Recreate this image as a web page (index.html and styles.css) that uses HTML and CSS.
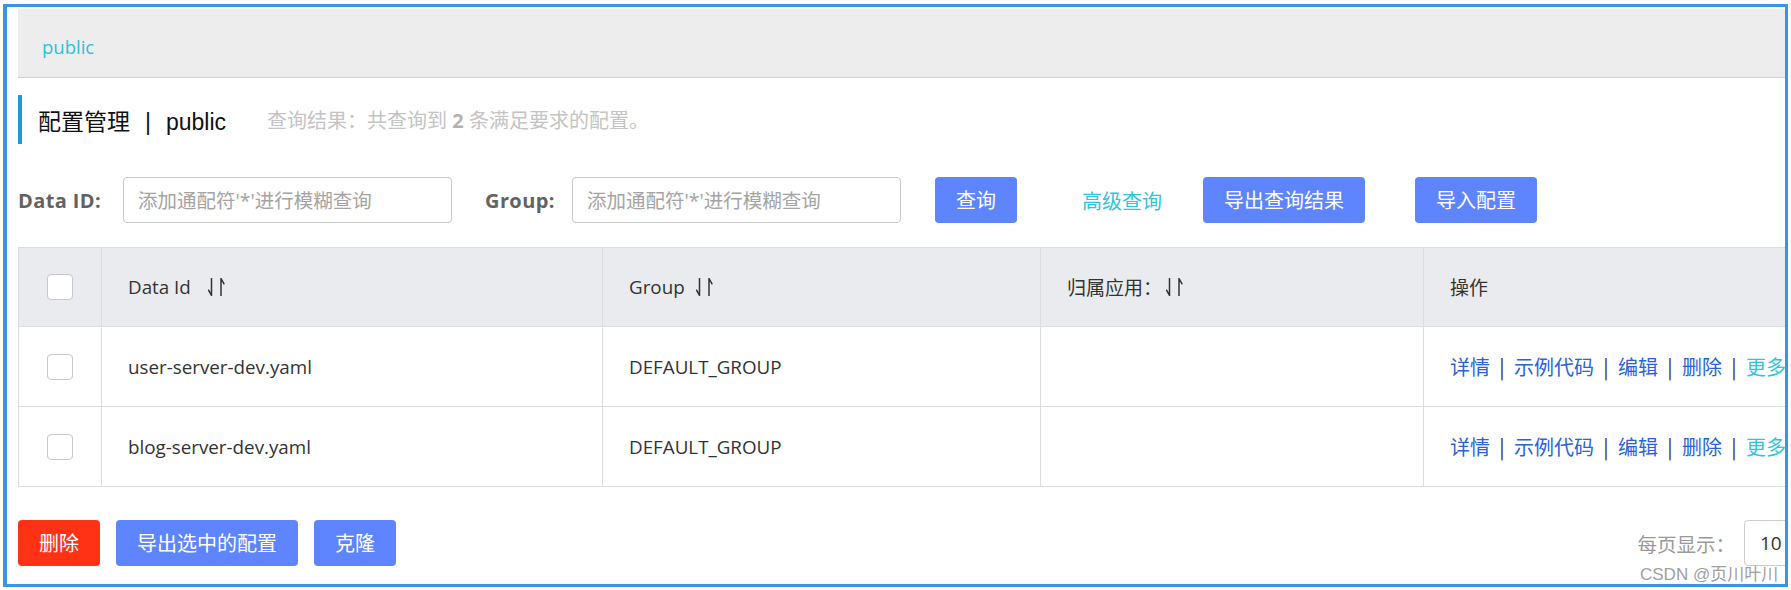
FILE: index.html
```html
<!DOCTYPE html>
<html lang="zh-CN">
<head>
<meta charset="utf-8">
<title>配置管理</title>
<link rel="stylesheet" href="styles.css">
</head>
<body>
<div class="shot">
  <div class="page">
    <div class="topbar"><span class="ns">public</span></div>

    <div class="title">
      <span class="title-main">配置管理<span class="title-sep">|</span>public</span>
      <span class="result">查询结果：共查询到 <b>2</b> 条满足要求的配置。</span>
    </div>

    <div class="search">
      <span class="lbl lbl-id">Data ID:</span>
      <input class="inp" type="text" placeholder="添加通配符'*'进行模糊查询">
      <span class="lbl lbl-group">Group:</span>
      <input class="inp" type="text" placeholder="添加通配符'*'进行模糊查询">
      <button class="btn btn-query">查询</button>
      <a class="adv">高级查询</a>
      <button class="btn btn-export">导出查询结果</button>
      <button class="btn btn-import">导入配置</button>
    </div>

    <div class="grid">
      <div class="row head">
        <div class="cell c-check"><span class="cb"></span></div>
        <div class="cell">Data Id<svg class="sort sort-id" viewBox="0 0 17 18" width="17" height="18"><path d="M3.5 0.5V17.5L0.6 12.2M13 17.5V0.5L16 5.8"/></svg></div>
        <div class="cell">Group<svg class="sort sort-group" viewBox="0 0 17 18" width="17" height="18"><path d="M3.5 0.5V17.5L0.6 12.2M13 17.5V0.5L16 5.8"/></svg></div>
        <div class="cell cjk">归属应用：<svg class="sort sort-app" viewBox="0 0 17 18" width="17" height="18"><path d="M3.5 0.5V17.5L0.6 12.2M13 17.5V0.5L16 5.8"/></svg></div>
        <div class="cell cjk">操作</div>
      </div>
      <div class="row">
        <div class="cell c-check"><span class="cb"></span></div>
        <div class="cell">user-server-dev.yaml</div>
        <div class="cell">DEFAULT_GROUP</div>
        <div class="cell"></div>
        <div class="cell actions"><a>详情</a><span class="sep">|</span><a>示例代码</a><span class="sep">|</span><a>编辑</a><span class="sep">|</span><a>删除</a><span class="sep">|</span><a class="more">更多</a></div>
      </div>
      <div class="row">
        <div class="cell c-check"><span class="cb"></span></div>
        <div class="cell">blog-server-dev.yaml</div>
        <div class="cell">DEFAULT_GROUP</div>
        <div class="cell"></div>
        <div class="cell actions"><a>详情</a><span class="sep">|</span><a>示例代码</a><span class="sep">|</span><a>编辑</a><span class="sep">|</span><a>删除</a><span class="sep">|</span><a class="more">更多</a></div>
      </div>
    </div>

    <div class="footer">
      <button class="btn btn-danger">删除</button>
      <button class="btn btn-gap">导出选中的配置</button>
      <button class="btn btn-gap">克隆</button>
      <div class="pager">
        <span class="pager-lbl">每页显示：</span>
        <span class="select">10</span>
      </div>
    </div>
  </div>
  <div class="watermark">CSDN @页川叶川</div>
</div>
</body>
</html>
```

FILE: styles.css
```css
html, body {
  margin: 0;
  padding: 0;
  background: #ffffff;
}

body {
  font-family: "Open Sans", "Noto Sans CJK SC", sans-serif;
  color: #333333;
}

.shot {
  position: relative;
  box-sizing: border-box;
  margin: 4px 0 0 3px;
  width: 1785px;
  height: 583px;
  border: 3px solid #3a95e3;
  border-left-width: 4px;
  overflow: hidden;
  background: #ffffff;
}

.page {
  width: 1800px;
  margin-left: 11px;
  padding-top: 2px;
}

/* namespace bar */
.topbar {
  box-sizing: border-box;
  height: 69px;
  padding: 7px 0 0 24px;
  display: flex;
  align-items: center;
  background: #ededed;
  border-bottom: 1px solid #cfcfcf;
}

.ns {
  font-size: 18.5px;
  color: #2fc0dd;
}

/* title */
.title {
  margin-top: 17px;
  height: 49px;
  box-sizing: border-box;
  border-left: 4px solid #1b9ad6;
  padding-left: 16px;
  display: flex;
  align-items: center;
}

.title-main {
  font-family: "Liberation Sans", "Noto Sans CJK SC", sans-serif;
  font-size: 23px;
  color: #111111;
}

.title-sep {
  display: inline-block;
  width: 36px;
  text-align: center;
}

.result {
  margin-left: 41px;
  font-size: 20px;
  color: #c4c4c4;
}

.result b {
  color: #b3b3b3;
}

/* search */
.search {
  margin-top: 33px;
  height: 46px;
  display: flex;
  align-items: center;
}

.lbl {
  font-size: 20px;
  font-weight: 700;
  letter-spacing: 0.4px;
  color: #626262;
  margin-right: 21px;
  white-space: nowrap;
}

.lbl-id { width: 84px; }
.lbl-group { width: 66px; }

.inp {
  box-sizing: border-box;
  width: 329px;
  height: 46px;
  margin: 0 33px 0 0;
  padding: 0 0 0 14px;
  border: 1px solid #c9c9c9;
  border-radius: 4px;
  font-family: "Open Sans", "Noto Sans CJK SC", sans-serif;
  font-size: 19.5px;
  color: #333333;
  outline: none;
  background: #ffffff;
}

.inp::placeholder {
  color: #a4a4a4;
}

.btn {
  box-sizing: border-box;
  height: 46px;
  padding: 0 21px;
  border: none;
  border-radius: 4px;
  background: #5f85fe;
  color: #ffffff;
  font-family: "Noto Sans CJK SC", sans-serif;
  font-size: 20px;
  line-height: 46px;
  white-space: nowrap;
}

.btn-query { margin-left: 1px; }

.adv {
  margin-left: 65px;
  font-family: "Noto Sans CJK SC", sans-serif;
  font-size: 20px;
  color: #33c3df;
}

.btn-export { margin-left: 41px; }
.btn-import { margin-left: 50px; }

/* table */
.grid {
  margin-top: 24px;
  border-left: 1px solid #dcdde1;
  border-top: 1px solid #dcdde1;
}

.row {
  display: grid;
  grid-template-columns: 83px 501px 438px 383px 420px;
  height: 80px;
  box-sizing: border-box;
  border-bottom: 1px solid #dcdde1;
}

.row.head {
  height: 79px;
  background: #eaebef;
}

.cell {
  box-sizing: border-box;
  border-right: 1px solid #dcdde1;
  padding-left: 26px;
  display: flex;
  align-items: center;
  font-size: 18.8px;
  color: #333333;
  white-space: nowrap;
}

.cell.cjk {
  font-size: 19px;
}

.c-check {
  padding-left: 0;
  justify-content: center;
}

.cb {
  box-sizing: border-box;
  width: 26px;
  height: 26px;
  border: 1px solid #c6c8d0;
  border-radius: 4px;
  background: #ffffff;
}

.sort {
  margin-left: 14px;
  fill: none;
  stroke: #333333;
  stroke-width: 1.5;
  stroke-linecap: round;
  stroke-linejoin: round;
}

.sort-id { margin-left: 17px; }
.sort-group { margin-left: 11px; }
.sort-app { margin-left: 4px; }

.actions {
  font-family: "Noto Sans CJK SC", sans-serif;
  font-size: 20px;
}

.actions a {
  color: #2a63d6;
}

.actions a.more {
  color: #33c3df;
}

.sep {
  display: inline-block;
  width: 24px;
  text-align: center;
  color: #333333;
}

/* footer */
.footer {
  margin-top: 33px;
  height: 46px;
  display: flex;
  align-items: center;
}

.btn-danger {
  background: #ff3216;
}

.btn-gap {
  margin-left: 16px;
}

.pager {
  margin-left: auto;
  display: flex;
  align-items: center;
}

.pager-lbl {
  font-family: "Noto Sans CJK SC", sans-serif;
  font-size: 19.5px;
  color: #9a9a9a;
  margin-right: 9px;
}

.select {
  box-sizing: border-box;
  width: 74px;
  height: 46px;
  padding-left: 15px;
  border: 1px solid #cccccc;
  border-radius: 4px;
  display: flex;
  align-items: center;
  font-size: 19px;
  color: #333333;
}

.watermark {
  position: absolute;
  left: 1633px;
  top: 557px;
  font-family: "Liberation Sans", "Noto Sans CJK SC", sans-serif;
  font-size: 17px;
  line-height: 22px;
  color: #a0a0a0;
  white-space: nowrap;
}
```
